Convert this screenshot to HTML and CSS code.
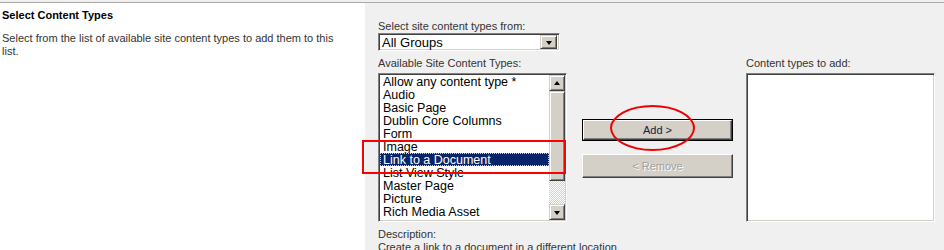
FILE: index.html
```html
<!DOCTYPE html>
<html>
<head>
<meta charset="utf-8">
<link rel="stylesheet" href="styles.css">
</head>
<body>
<div class="frame">
  <div class="left">
    <div class="title">Select Content Types</div>
    <div class="desc">Select from the list of available site content types to add them to this list.</div>
  </div>
  <div class="right">
    <div class="col-avail">
      <div class="label label-first">Select site content types from:</div>
      <div class="select">
        <span class="select-text">All Groups</span>
        <span class="btn3d select-btn"><span class="arrow-down"></span></span>
      </div>
      <div class="label label-second">Available Site Content Types:</div>
      <div class="listbox">
        <div class="items">
          <div class="item">Allow any content type *</div>
          <div class="item">Audio</div>
          <div class="item">Basic Page</div>
          <div class="item">Dublin Core Columns</div>
          <div class="item">Form</div>
          <div class="item">Image</div>
          <div class="item selected">Link to a Document</div>
          <div class="item">List View Style</div>
          <div class="item">Master Page</div>
          <div class="item">Picture</div>
          <div class="item">Rich Media Asset</div>
        </div>
        <div class="scrollbar">
          <span class="btn3d sb-btn"><span class="arrow-up"></span></span>
          <span class="btn3d sb-thumb"></span>
          <span class="sb-track"></span>
          <span class="btn3d sb-btn"><span class="arrow-down"></span></span>
        </div>
      </div>
      <div class="label label-desc">Description:</div>
      <div class="label">Create a link to a document in a different location.</div>
    </div>
    <div class="col-buttons">
      <div class="button default"><span class="btn-inner">Add &gt;</span></div>
      <div class="button disabled"><span class="btn-inner">&lt; Remove</span></div>
    </div>
    <div class="col-add">
      <div class="label label-second-add">Content types to add:</div>
      <div class="listbox empty"></div>
    </div>
  </div>
  <div class="mark-rect"></div>
  <div class="mark-ellipse"></div>
</div>
</body>
</html>
```

FILE: styles.css
```css
html, body {
  margin: 0;
  padding: 0;
}
body {
  background: #f0f0f0;
  font-family: Tahoma, "Liberation Sans", Arial, sans-serif;
  font-size: 11px;
  color: #000;
  width: 944px;
  height: 250px;
  overflow: hidden;
}
.frame {
  position: relative;
  display: flex;
  margin-top: 2px;
  border-top: 1px solid #a9a9a9;
  height: 247px;
}
.left {
  width: 363px;
  flex: none;
  background: #fff;
  padding: 6px 0 0 2px;
}
.title {
  font-weight: bold;
  line-height: 13px;
  color: #000;
}
.desc {
  margin-top: 10px;
  width: 345px;
  line-height: 13px;
  color: #333;
}
.right {
  flex: 1;
  display: flex;
  padding-left: 13px;
}
.label {
  line-height: 13px;
  color: #333;
  white-space: nowrap;
}
.label-first {
  margin-top: 17px;
}
.label-second {
  margin-top: 6px;
}
.label-second-add {
  margin-top: 54px;
}
.label-desc {
  margin-top: 6px;
}
.col-avail {
  width: 189px;
  flex: none;
}
.select {
  width: 182px;
  height: 18px;
  box-sizing: border-box;
  background: #fff;
  border-top: 1px solid #808080;
  border-left: 1px solid #808080;
  border-right: 1px solid #fff;
  border-bottom: 1px solid #fff;
  box-shadow: inset 1px 1px 0 #404040, inset -1px -1px 0 #d4d0c8;
  display: flex;
  align-items: center;
  justify-content: space-between;
  padding: 1px 2px 1px 3px;
}
.select-text {
  font-size: 13px;
  line-height: 15px;
}
.btn3d {
  background: #d4d0c8;
  border-top: 1px solid #d4d0c8;
  border-left: 1px solid #d4d0c8;
  border-right: 1px solid #404040;
  border-bottom: 1px solid #404040;
  box-shadow: inset 1px 1px 0 #fff, inset -1px -1px 0 #808080;
  box-sizing: border-box;
  display: flex;
  align-items: center;
  justify-content: center;
}
.select-btn {
  width: 17px;
  height: 14px;
}
.arrow-down {
  width: 0;
  height: 0;
  border-left: 3.5px solid transparent;
  border-right: 3.5px solid transparent;
  border-top: 4px solid #000;
  margin-top: 1px;
}
.arrow-up {
  width: 0;
  height: 0;
  border-left: 3.5px solid transparent;
  border-right: 3.5px solid transparent;
  border-bottom: 4px solid #000;
}
.listbox {
  margin-top: 3px;
  width: 189px;
  height: 149px;
  box-sizing: border-box;
  background: #fff;
  border-top: 1px solid #808080;
  border-left: 1px solid #808080;
  border-right: 1px solid #fff;
  border-bottom: 1px solid #fff;
  box-shadow: inset 1px 1px 0 #404040, inset -1px -1px 0 #d4d0c8;
  padding: 1px;
  display: flex;
  overflow: hidden;
}
.items {
  flex: 1;
  overflow: hidden;
  font-size: 12.5px;
}
.item {
  height: 13px;
  line-height: 15px;
  padding-left: 3px;
  white-space: nowrap;
}
.item.selected {
  background: #0a246a;
  color: #fff;
  outline: 1px dotted #d4d0c8;
  outline-offset: -1px;
}
.scrollbar {
  width: 16px;
  flex: none;
  display: flex;
  flex-direction: column;
}
.sb-btn {
  height: 16px;
  flex: none;
}
.sb-thumb {
  height: 90px;
  flex: none;
}
.sb-track {
  flex: 1;
  background: repeating-conic-gradient(#d4d0c8 0 25%, #fff 0 50%) 0 0 / 2px 2px;
}
.col-buttons {
  width: 151px;
  flex: none;
  margin-left: 15px;
  padding-top: 116px;
}
.button {
  height: 22px;
  box-sizing: border-box;
  background: #d4d0c8;
  display: flex;
}
.button.default {
  border: 1px solid #000;
}
.btn-inner {
  flex: 1;
  display: flex;
  align-items: center;
  justify-content: center;
  border-top: 1px solid #fff;
  border-left: 1px solid #fff;
  border-right: 1px solid #404040;
  border-bottom: 1px solid #404040;
  box-shadow: inset -1px -1px 0 #808080;
  color: #1a1a40;
}
.button.disabled {
  margin-top: 13px;
  height: 24px;
}
.button.disabled .btn-inner {
  color: #a0a0a0;
  text-shadow: 1px 1px 0 #fff;
}
.col-add {
  width: 189px;
  flex: none;
  margin-left: 13px;
}
.mark-rect {
  position: absolute;
  left: 362px;
  top: 137px;
  width: 200px;
  height: 30px;
  border: 2px solid #f00;
}
.mark-ellipse {
  position: absolute;
  left: 610px;
  top: 102px;
  width: 81px;
  height: 42px;
  border: 2px solid #e00;
  border-radius: 50%;
}
```
